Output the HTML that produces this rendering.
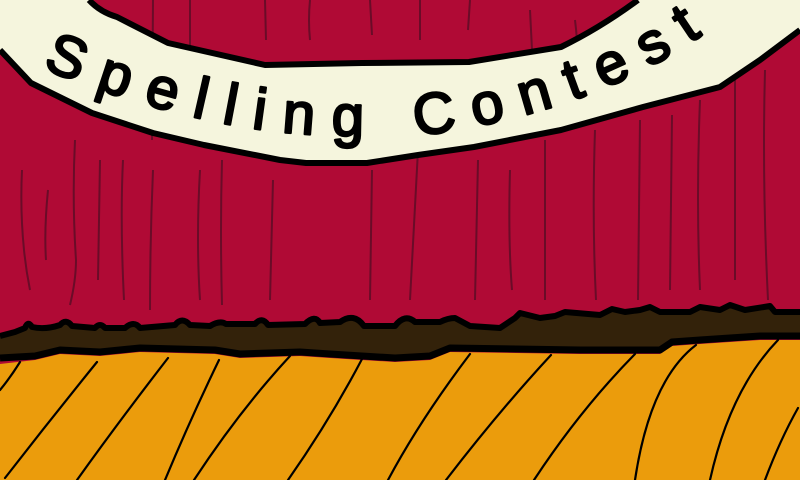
<!DOCTYPE html>
<html><head><meta charset="utf-8"><style>html,body{margin:0;padding:0;overflow:hidden;background:#b00a35}svg{display:block}</style></head>
<body>
<svg width="800" height="480" viewBox="0 0 800 480" xmlns="http://www.w3.org/2000/svg">
<rect width="800" height="480" fill="#b00a35"/>
<g stroke="#6a0c28" stroke-width="2" fill="none">
<path d="M22 170 Q20 210 24 250 Q26 270 30 290"/>
<path d="M48 190 Q44 230 46 260"/>
<path d="M75 140 Q72 200 76 260 Q76 280 70 305"/>
<path d="M100 160 L98 280"/>
<path d="M123 160 Q120 220 124 300"/>
<path d="M153 0 L152 140 M153 170 Q150 240 150 310"/>
<path d="M190 0 L190 60 M200 170 Q196 240 200 300"/>
<path d="M222 160 Q220 230 222 305"/>
<path d="M273 180 L270 300"/>
<path d="M310 0 Q308 20 310 40"/>
<path d="M372 170 L370 300"/>
<path d="M418 150 Q414 220 410 300"/>
<path d="M478 160 L475 300"/>
<path d="M510 170 Q508 240 512 290"/>
<path d="M530 10 L532 50"/>
<path d="M545 140 L545 300"/>
<path d="M575 20 Q580 60 575 90"/>
<path d="M595 130 Q592 220 596 300"/>
<path d="M640 120 L638 300"/>
<path d="M672 115 L670 290"/>
<path d="M700 100 Q696 200 700 290"/>
<path d="M735 80 L735 280"/>
<path d="M765 70 Q762 180 768 300"/>
<path d="M265 0 L266 40 M370 0 L372 35 M420 0 L420 40 M470 0 L468 30 M650 0 L652 20"/>
</g>
<path d="M0 0 L89 0 Q100 12 117 17 L168 43 L265 65 L362 63 L469 62 L561 47 Q600 28 638 0 L800 0 L800 30 L760 60 L720 87 L643 107 L561 130 L474 147 L418 155 L367 163 L306 163 L280 160 L204 145 L153 133 L92 113 L31 83 L0 50 Z" fill="#f5f5dd"/>
<path d="M89 0 Q100 12 117 17 L168 43 L265 65 L362 63 L469 62 L561 47 Q600 28 638 0" fill="none" stroke="#000" stroke-width="6" stroke-linejoin="round"/>
<path d="M0 50 L31 83 L92 113 L153 133 L204 145 L280 160 L306 163 L367 163 L418 155 L474 147 L561 130 L643 107 L720 87 L760 60 L800 30" fill="none" stroke="#000" stroke-width="6" stroke-linejoin="round"/>
<defs><path id="tp" d="M42 68 Q150 112 250 128 Q330 140 430 134 Q600 110 712 28"/></defs>
<text font-family="'Liberation Sans',sans-serif" font-size="58" fill="#000" stroke="#000" stroke-width="2.5" stroke-linejoin="round"><textPath href="#tp" textLength="690" lengthAdjust="spacing">Spelling  Contest</textPath></text>
<path d="M0 336 L15 332 L25 328 Q28 320 32 327 Q45 330 60 325 Q66 318 72 326 L95 328 Q100 322 105 328 L125 328 Q134 320 140 328 L175 325 Q182 316 190 325 L210 326 Q220 320 226 324 L255 324 Q262 316 268 325 L305 324 Q315 314 320 323 L340 322 Q354 312 364 326 L395 326 Q405 313 415 322 L440 322 Q448 318 455 318 L470 326 L500 328 L515 318 L520 313 L540 318 L555 316 L565 312 L600 315 L612 309 L625 312 L640 310 L650 307 L660 312 L690 312 L700 307 L720 310 L730 305 L745 310 L770 306 L775 312 L800 312 L800 336 L760 336 L700 340 L672 342 L660 350 L580 350 L450 348 L430 356 L395 358 L330 354 L300 352 L240 354 L215 350 L140 348 L100 352 L60 350 L35 356 L0 358 Z" fill="#33220a"/>
<path d="M0 336 L15 332 L25 328 Q28 320 32 327 Q45 330 60 325 Q66 318 72 326 L95 328 Q100 322 105 328 L125 328 Q134 320 140 328 L175 325 Q182 316 190 325 L210 326 Q220 320 226 324 L255 324 Q262 316 268 325 L305 324 Q315 314 320 323 L340 322 Q354 312 364 326 L395 326 Q405 313 415 322 L440 322 Q448 318 455 318 L470 326 L500 328 L515 318 L520 313 L540 318 L555 316 L565 312 L600 315 L612 309 L625 312 L640 310 L650 307 L660 312 L690 312 L700 307 L720 310 L730 305 L745 310 L770 306 L775 312 L800 312" fill="none" stroke="#000" stroke-width="6" stroke-linejoin="round"/>
<path d="M0 364 L35 360 L60 354 L100 356 L140 352 L215 354 L240 358 L300 356 L330 358 L395 362 L430 360 L450 352 L580 354 L660 354 L672 346 L700 344 L760 340 L800 340 L800 480 L0 480 Z" fill="#eb9c0c"/>
<path d="M0 358 L35 356 L60 350 L100 352 L140 348 L215 350 L240 354 L300 352 L330 354 L395 358 L430 356 L450 348 L580 350 L660 350 L672 342 L700 340 L760 336 L800 336 L800 333" fill="none" stroke="#000" stroke-width="7" stroke-linejoin="round"/>
<g stroke="#000" stroke-width="2.2" fill="none" stroke-linecap="round">
<path d="M20 362 Q10 378 0 390"/>
<path d="M97 362 Q50 420 5 478"/>
<path d="M168 358 Q120 420 77 480"/>
<path d="M219 360 Q190 420 165 480"/>
<path d="M290 356 Q240 410 194 480"/>
<path d="M362 359 Q330 420 288 480"/>
<path d="M470 354 Q420 420 388 480"/>
<path d="M551 355 Q500 410 446 480"/>
<path d="M635 354 Q580 410 534 480"/>
<path d="M696 345 Q650 380 635 480"/>
<path d="M778 340 Q730 390 710 480"/>
<path d="M798 408 Q780 440 765 480"/>
</g>
</svg>
</body></html>
